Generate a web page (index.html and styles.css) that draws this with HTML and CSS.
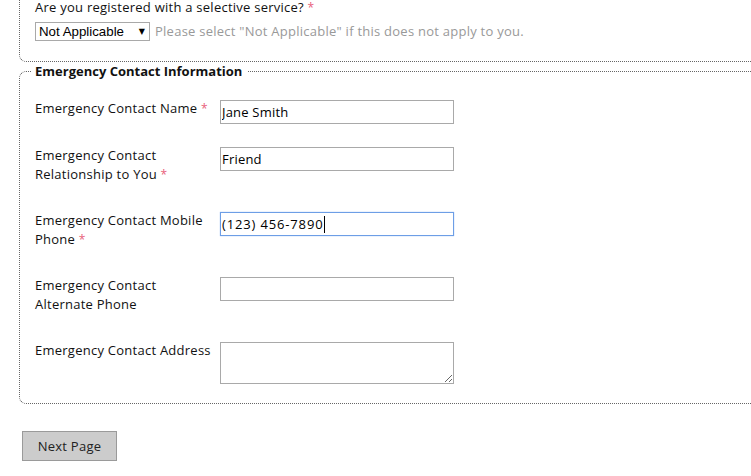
FILE: index.html
```html
<!DOCTYPE html>
<html>
<head>
<meta charset="utf-8">
<link rel="stylesheet" href="styles.css">
</head>
<body>
<div class="page">
  <div class="section-tail">
    <div class="question">Are you registered with a selective service? <span class="req">*</span></div>
    <div class="select-row">
      <span class="select-wrap">
        <select class="select"><option>Not Applicable</option></select>
        <span class="select-arrow">&#9660;</span>
      </span>
      <span class="hint">Please select "Not Applicable" if this does not apply to you.</span>
    </div>
  </div>

  <fieldset class="section">
    <legend class="legend">Emergency Contact Information</legend>
    <div class="row">
      <label class="label">Emergency Contact Name <span class="req">*</span></label>
      <input class="field" type="text" value="Jane Smith">
    </div>
    <div class="row">
      <label class="label">Emergency Contact Relationship to You <span class="req">*</span></label>
      <input class="field" type="text" value="Friend">
    </div>
    <div class="row">
      <label class="label">Emergency Contact Mobile Phone <span class="req">*</span></label>
      <span class="field-wrap">
        <input class="field focused phone" type="text" value="(123) 456-7890">
        <span class="caret"></span>
      </span>
    </div>
    <div class="row">
      <label class="label">Emergency Contact Alternate Phone</label>
      <input class="field" type="text" value="">
    </div>
    <div class="row last">
      <label class="label">Emergency Contact Address</label>
      <textarea class="area"></textarea>
    </div>
  </fieldset>

  <div class="actions">
    <button class="btn" type="button">Next Page</button>
  </div>
</div>
</body>
</html>
```

FILE: styles.css
```css
html, body {
  margin: 0;
  padding: 0;
  background: #fff;
  overflow: hidden;
}
body {
  font-family: "Open Sans", "DejaVu Sans", sans-serif;
  font-size: 13px;
  line-height: 19px;
  color: #111;
  letter-spacing: 0.25px;
}
.page {
  padding-left: 19px;
  width: 820px;
}
.req {
  color: #e8607a;
  font-size: 12px;
}
.section-tail {
  margin-top: -2px;
  border-left: 1px dotted #666;
  border-bottom: 1px dotted #666;
  border-bottom-left-radius: 7px;
  padding: 0 0 20px 15px;
}
.question {
  height: 19px;
}
.select-row {
  margin-top: 5px;
  display: flex;
  align-items: center;
  height: 19px;
}
.select-wrap {
  position: relative;
  display: inline-block;
  width: 115px;
  height: 19px;
}
.select {
  -webkit-appearance: none;
  appearance: none;
  box-sizing: border-box;
  width: 115px;
  height: 19px;
  margin: 0;
  border: 1px solid #a9a9a9;
  border-radius: 0;
  background: #fff;
  font-family: "Liberation Sans", Arial, sans-serif;
  font-size: 13.3px;
  letter-spacing: 0;
  color: #000;
  padding: 0 0 0 3px;
  line-height: 17px;
}
.select-arrow {
  position: absolute;
  right: 5px;
  top: 5px;
  font-size: 8px;
  line-height: 8px;
  color: #000;
  letter-spacing: 0;
  pointer-events: none;
}
.hint {
  margin-left: 5px;
  color: #999;
}
.section {
  margin: 0;
  border: 1px dotted #666;
  border-right: none;
  border-radius: 7px 0 0 7px;
  padding: 19px 0 19px 15px;
  min-width: 0;
}
.legend {
  font-weight: bold;
  letter-spacing: 0;
  padding: 0 5px 0 4px;
  margin-left: -4px;
  color: #111;
}
.row {
  display: flex;
  align-items: flex-start;
  margin-bottom: 23px;
}
.row.last {
  margin-bottom: 0;
}
.label {
  width: 185px;
  flex: none;
  margin-top: -1px;
  padding-bottom: 5px;
  padding-right: 6px;
  box-sizing: border-box;
}
.field-wrap {
  position: relative;
  display: inline-block;
}
.field {
  box-sizing: border-box;
  width: 234px;
  height: 24px;
  margin: 0;
  border: 1px solid #a9a9a9;
  padding: 1px 1px;
  font-family: "Open Sans", "DejaVu Sans", sans-serif;
  font-size: 13px;
  letter-spacing: 0.2px;
  color: #000;
  outline: none;
  border-radius: 0;
  background: #fff;
}
.field.phone {
  letter-spacing: 0.85px;
}
.field.focused {
  border-color: #6d9ee6;
  box-shadow: 0 0 1px #8fb7ef;
}
.caret {
  position: absolute;
  left: 104px;
  top: 4px;
  width: 1px;
  height: 17px;
  background: #000;
}
.area {
  box-sizing: border-box;
  width: 234px;
  height: 42px;
  margin: 0;
  border: 1px solid #a9a9a9;
  padding: 2px;
  font-family: "Open Sans", sans-serif;
  font-size: 13px;
  border-radius: 0;
  resize: both;
}
.actions {
  padding: 27px 0 0 3px;
}
.btn {
  width: 95px;
  height: 30px;
  background: #cccccc;
  border: 1px solid #9a9a9a;
  border-radius: 0;
  font-family: "Open Sans", "DejaVu Sans", sans-serif;
  font-size: 13px;
  letter-spacing: 0.25px;
  color: #222;
  padding: 0;
  margin: 0;
}
```
